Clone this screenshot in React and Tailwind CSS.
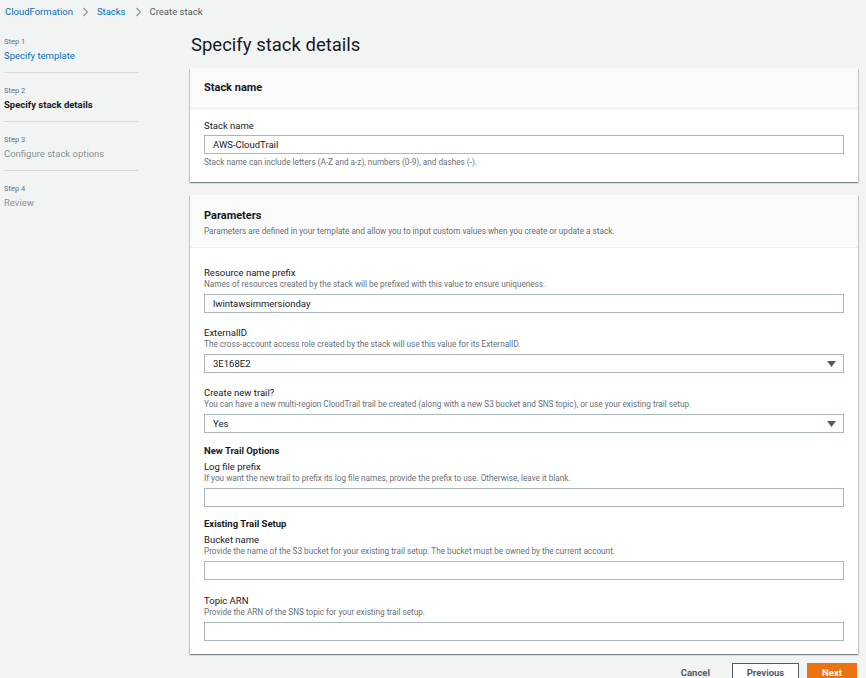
import React from "react";

const font = { fontFamily: "Roboto, 'Liberation Sans', sans-serif" };

function Chevron() {
  return (
    <svg width="5" height="10" viewBox="0 0 5 10" className="ml-[10px] mr-[9px]">
      <path d="M0.5 1 L4.5 5 L0.5 9" fill="none" stroke="#879596" strokeWidth="1.2" />
    </svg>
  );
}

function Caret() {
  return (
    <svg width="9" height="6" viewBox="0 0 9 6" className="absolute right-[7px] top-[6px]">
      <path d="M0 0 H9 L4.5 6 Z" fill="#545b64" />
    </svg>
  );
}

function Input({ value, select, className = "mt-[4px]" }) {
  return (
    <div
      className={
        "relative h-[19px] w-[640px] border border-[#aab7b8] bg-white pl-[8px] text-[9.5px] leading-[17px] text-[#16191f] " +
        className
      }
    >
      {value}
      {select && <Caret />}
    </div>
  );
}

function Field({ label, desc, value, select, className = "" }) {
  return (
    <div className={"flex flex-col " + className}>
      <div className="text-[9.5px] leading-[12px] text-[#16191f]">{label}</div>
      {desc && <div className="text-[8.2px] leading-[11px] text-[#687078]">{desc}</div>}
      <Input value={value} select={select} />
    </div>
  );
}

function Step({ n, title, state }) {
  const titleCls =
    state === "done"
      ? "text-[#0073bb]"
      : state === "current"
      ? "font-bold text-[#16191f]"
      : "text-[#879596]";
  return (
    <div className="flex flex-col">
      <div className="text-[7.5px] leading-[10px] text-[#687078]">Step {n}</div>
      <div className={"mt-[3px] text-[9.5px] leading-[12px] " + titleCls}>{title}</div>
    </div>
  );
}

const cardShadow =
  "shadow-[0_1px_1px_0_rgba(0,28,36,0.3),1px_1px_1px_0_rgba(0,28,36,0.15),-1px_1px_1px_0_rgba(0,28,36,0.15)]";

export default function App() {
  return (
    <div style={font} className="h-[678px] w-[866px] overflow-hidden bg-[#f2f3f3]">
      {/* breadcrumb */}
      <div className="flex h-[24px] items-center pl-[5px] text-[9.5px]">
        <span className="text-[#0073bb]">CloudFormation</span>
        <Chevron />
        <span className="text-[#0073bb]">Stacks</span>
        <Chevron />
        <span className="text-[#545b64]">Create stack</span>
      </div>

      <div className="flex">
        {/* sidebar */}
        <div className="ml-[4px] w-[134px] pt-[13px]">
          <Step n={1} title="Specify template" state="done" />
          <div className="mt-[10px] h-px bg-[#d5dbdb]" />
          <div className="pt-[13px]">
            <Step n={2} title="Specify stack details" state="current" />
          </div>
          <div className="mt-[10px] h-px bg-[#d5dbdb]" />
          <div className="pt-[13px]">
            <Step n={3} title="Configure stack options" state="todo" />
          </div>
          <div className="mt-[10px] h-px bg-[#d5dbdb]" />
          <div className="pt-[13px]">
            <Step n={4} title="Review" state="todo" />
          </div>
        </div>

        {/* main */}
        <div className="ml-[52px] w-[668px]">
          <h1 className="mt-[8px] h-[36px] pl-[1px] text-[18.5px] leading-[26px] text-[#16191f]">
            Specify stack details
          </h1>

          {/* card 1 */}
          <div className={"bg-white " + cardShadow}>
            <div className="flex h-[41px] items-center border-b border-[#eaeded] bg-[#fafafa] px-[14px]">
              <span className="text-[11px] font-bold text-[#16191f]">Stack name</span>
            </div>
            <div className="px-[14px] pb-[14px] pt-[11px]">
              <div className="text-[9.5px] leading-[12px] text-[#16191f]">Stack name</div>
              <Input value="AWS-CloudTrail" className="mt-[3px]" />
              <div className="mt-[3px] text-[8.2px] leading-[11px] text-[#687078]">
                Stack name can include letters (A-Z and a-z), numbers (0-9), and dashes (-).
              </div>
            </div>
          </div>

          {/* card 2 */}
          <div className={"mt-[13px] bg-white " + cardShadow}>
            <div className="h-[53px] border-b border-[#eaeded] bg-[#fafafa] px-[14px] pt-[14px]">
              <div className="text-[11px] font-bold leading-[14px] text-[#16191f]">Parameters</div>
              <div className="mt-[3px] text-[8.2px] leading-[11px] text-[#687078]">
                Parameters are defined in your template and allow you to input custom values when you create or update a stack.
              </div>
            </div>
            <div className="px-[14px] pb-[13px] pt-[19px]">
              <Field
                label="Resource name prefix"
                desc="Names of resources created by the stack will be prefixed with this value to ensure uniqueness."
                value="lwintawsimmersionday"
              />
              <Field
                className="mt-[14px]"
                label="ExternalID"
                desc="The cross-account access role created by the stack will use this value for its ExternalID."
                value="3E168E2"
                select
              />
              <Field
                className="mt-[14px]"
                label="Create new trail?"
                desc="You can have a new multi-region CloudTrail trail be created (along with a new S3 bucket and SNS topic), or use your existing trail setup."
                value="Yes"
                select
              />
              <div className="mt-[12px] text-[9.5px] font-bold leading-[12px] text-[#16191f]">New Trail Options</div>
              <Field
                className="mt-[4px]"
                label="Log file prefix"
                desc="If you want the new trail to prefix its log file names, provide the prefix to use. Otherwise, leave it blank."
                value=""
              />
              <div className="mt-[11px] text-[9.5px] font-bold leading-[12px] text-[#16191f]">Existing Trail Setup</div>
              <Field
                className="mt-[4px]"
                label="Bucket name"
                desc="Provide the name of the S3 bucket for your existing trail setup. The bucket must be owned by the current account."
                value=""
              />
              <Field
                className="mt-[15px]"
                label="Topic ARN"
                desc="Provide the ARN of the SNS topic for your existing trail setup."
                value=""
              />
            </div>
          </div>

          {/* buttons */}
          <div className="mt-[9px] flex items-start justify-end pr-[1px]">
            <button className="mr-[22px] pt-[3px] text-[9.5px] font-bold leading-[14px] text-[#545b64]">Cancel</button>
            <button className="mr-[8px] flex h-[24px] w-[67px] items-start justify-center border border-[#545b64] bg-white pt-[2px] text-[9.5px] font-bold leading-[14px] text-[#545b64]">
              Previous
            </button>
            <button className="flex h-[24px] w-[50px] items-start justify-center bg-[#ec7211] pt-[3px] text-[9.5px] font-bold leading-[14px] text-white">
              Next
            </button>
          </div>
        </div>
      </div>
    </div>
  );
}
